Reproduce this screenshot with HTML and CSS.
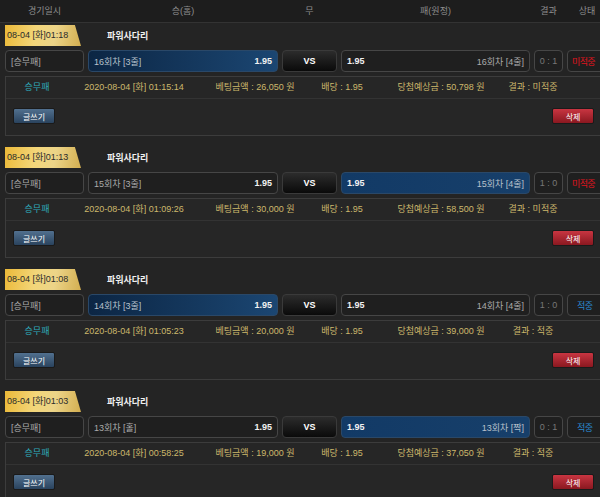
FILE: index.html
```html
<!DOCTYPE html>
<html lang="ko">
<head>
  <meta charset="UTF-8" />
  <title>베팅내역</title>
  <link rel="stylesheet" href="styles.css">
</head>
<body>

<div class="board">
  <div class="board-head">
    <span>경기일시</span>
    <span>승(홈)</span>
    <span>무</span>
    <span>패(원정)</span>
    <span>결과</span>
    <span>상태</span>
  </div>

  <!-- 16회차 -->
  <div class="bet">
    <div class="bet-title">
      <span class="tab">08-04 [화]01:18</span>
      <span class="game">파워사다리</span>
    </div>
    <div class="bet-row">
      <div class="cell cell-type">[승무패]</div>
      <div class="cell cell-home picked"><span>16회차 [3줄]</span><b>1.95</b></div>
      <div class="cell cell-vs">VS</div>
      <div class="cell cell-away"><b>1.95</b><span>16회차 [4줄]</span></div>
      <div class="cell cell-score">0 : 1</div>
      <div class="cell cell-state lose">미적중</div>
    </div>
    <div class="bet-info">
      <div class="info-row">
        <span class="kind">승무패</span>
        <span>2020-08-04 [화] 01:15:14</span>
        <span>베팅금액 : 26,050 원</span>
        <span>배당 : 1.95</span>
        <span>당첨예상금 : 50,798 원</span>
        <span>결과 : 미적중</span>
      </div>
      <div class="info-actions">
        <button class="btn btn-write">글쓰기</button>
        <button class="btn btn-del">삭제</button>
      </div>
    </div>
  </div>

  <!-- 15회차 -->
  <div class="bet">
    <div class="bet-title">
      <span class="tab">08-04 [화]01:13</span>
      <span class="game">파워사다리</span>
    </div>
    <div class="bet-row">
      <div class="cell cell-type">[승무패]</div>
      <div class="cell cell-home"><span>15회차 [3줄]</span><b>1.95</b></div>
      <div class="cell cell-vs">VS</div>
      <div class="cell cell-away picked"><b>1.95</b><span>15회차 [4줄]</span></div>
      <div class="cell cell-score">1 : 0</div>
      <div class="cell cell-state lose">미적중</div>
    </div>
    <div class="bet-info">
      <div class="info-row">
        <span class="kind">승무패</span>
        <span>2020-08-04 [화] 01:09:26</span>
        <span>베팅금액 : 30,000 원</span>
        <span>배당 : 1.95</span>
        <span>당첨예상금 : 58,500 원</span>
        <span>결과 : 미적중</span>
      </div>
      <div class="info-actions">
        <button class="btn btn-write">글쓰기</button>
        <button class="btn btn-del">삭제</button>
      </div>
    </div>
  </div>

  <!-- 14회차 -->
  <div class="bet">
    <div class="bet-title">
      <span class="tab">08-04 [화]01:08</span>
      <span class="game">파워사다리</span>
    </div>
    <div class="bet-row">
      <div class="cell cell-type">[승무패]</div>
      <div class="cell cell-home picked"><span>14회차 [3줄]</span><b>1.95</b></div>
      <div class="cell cell-vs">VS</div>
      <div class="cell cell-away"><b>1.95</b><span>14회차 [4줄]</span></div>
      <div class="cell cell-score">1 : 0</div>
      <div class="cell cell-state win">적중</div>
    </div>
    <div class="bet-info">
      <div class="info-row">
        <span class="kind">승무패</span>
        <span>2020-08-04 [화] 01:05:23</span>
        <span>베팅금액 : 20,000 원</span>
        <span>배당 : 1.95</span>
        <span>당첨예상금 : 39,000 원</span>
        <span>결과 : 적중</span>
      </div>
      <div class="info-actions">
        <button class="btn btn-write">글쓰기</button>
        <button class="btn btn-del">삭제</button>
      </div>
    </div>
  </div>

  <!-- 13회차 -->
  <div class="bet">
    <div class="bet-title">
      <span class="tab">08-04 [화]01:03</span>
      <span class="game">파워사다리</span>
    </div>
    <div class="bet-row">
      <div class="cell cell-type">[승무패]</div>
      <div class="cell cell-home"><span>13회차 [홀]</span><b>1.95</b></div>
      <div class="cell cell-vs">VS</div>
      <div class="cell cell-away picked"><b>1.95</b><span>13회차 [짝]</span></div>
      <div class="cell cell-score">0 : 1</div>
      <div class="cell cell-state win">적중</div>
    </div>
    <div class="bet-info">
      <div class="info-row">
        <span class="kind">승무패</span>
        <span>2020-08-04 [화] 00:58:25</span>
        <span>베팅금액 : 19,000 원</span>
        <span>배당 : 1.95</span>
        <span>당첨예상금 : 37,050 원</span>
        <span>결과 : 적중</span>
      </div>
      <div class="info-actions">
        <button class="btn btn-write">글쓰기</button>
        <button class="btn btn-del">삭제</button>
      </div>
    </div>
  </div>
</div>

</body>
</html>
```

FILE: styles.css
```css
:root {
  --bg: #242424;
  --panel: #262626;
  --line: #3c3c3c;
  --gold: #cdb86c;
  --teal: #2eaabb;
}

html, body {
  margin: 0;
  height: 100%;
  overflow: hidden;
  background: var(--bg);
  font-family: 'Liberation Sans', 'Noto Sans CJK KR', sans-serif;
  font-size: 9px;
  color: #aaa;
}

.board {
  width: 607px;
}

.board-head,
.bet-row {
  display: grid;
  grid-template-columns: 79px 190px 55px 189px 29px 40px;
  column-gap: 4px;
  padding-left: 5px;
}

.board-head {
  height: 22px;
  line-height: 22px;
  background: #1d1d1d;
  border-bottom: 1px solid #333;
  color: #8e8e8e;
  text-align: center;
}

.bet {
  padding-top: 2px;
  margin-bottom: 9px;
}

.bet-title {
  display: flex;
  align-items: center;
  height: 21px;
  padding-left: 5px;
}

.tab {
  width: 76px;
  height: 21px;
  line-height: 21px;
  padding-left: 2px;
  box-sizing: border-box;
  color: #2b2b2b;
  background: linear-gradient(100deg, #ebb938 0%, #f3d67a 40%, #ecd488 65%, #d3ae50 100%);
  clip-path: polygon(0 0, 92% 0, 100% 100%, 0 100%);
}

.game {
  margin-left: 26px;
  color: #f0f0f0;
  font-weight: bold;
}

.bet-row {
  margin-top: 4px;
  height: 22px;
}

.cell {
  display: flex;
  align-items: center;
  padding: 0 5px;
  border: 1px solid #464646;
  border-radius: 4px;
  background: #1f1f1f;
  white-space: nowrap;
}

.cell-home,
.cell-away {
  justify-content: space-between;
  color: #ababab;
}

.cell b {
  color: #f2f2f2;
  font-weight: bold;
}

.cell-home.picked {
  background: linear-gradient(to right, #0c2644, #1b4672);
  border-color: #2a4868;
  color: #b8c2cc;
}

.cell-away.picked {
  background: linear-gradient(to right, #123a66, #173f6a);
  border-color: #2a4868;
  color: #b8c2cc;
}

.cell-vs {
  justify-content: center;
  color: #fff;
  font-weight: bold;
  background: linear-gradient(#2c2c2c, #0a0a0a);
  border-color: #3a3a3a;
}

.cell-score {
  justify-content: center;
  color: #777;
  padding: 0;
}

.cell-state {
  padding-left: 4px;
  letter-spacing: -0.6px;
}

.cell-state.win {
  padding-left: 9px;
}

.lose { color: #e0141e; }
.win { color: #2a8ad0; }

.bet-info {
  margin: 4px 5px 0 5px;
  width: 597px;
  border: 1px solid var(--line);
  background: var(--panel);
  box-sizing: border-box;
}

.info-row {
  display: grid;
  grid-template-columns: 62px 132px 110px 64px 134px 50px 1fr;
  height: 21px;
  line-height: 21px;
  text-align: center;
  color: var(--gold);
  border-bottom: 1px solid #333;
  white-space: nowrap;
}

.info-row .kind {
  color: var(--teal);
}

.info-actions {
  display: flex;
  justify-content: space-between;
  padding: 9px 7px 11px;
}

.btn {
  width: 42px;
  height: 16px;
  padding: 0;
  border: 1px solid #1a1a1a;
  border-radius: 2px;
  color: #fff;
  font-family: inherit;
  font-size: 8px;
  cursor: pointer;
}

.btn-write {
  background: linear-gradient(#51708f, #2a435e);
}

.btn-del {
  background: linear-gradient(#c83541, #8a1820);
}
```
